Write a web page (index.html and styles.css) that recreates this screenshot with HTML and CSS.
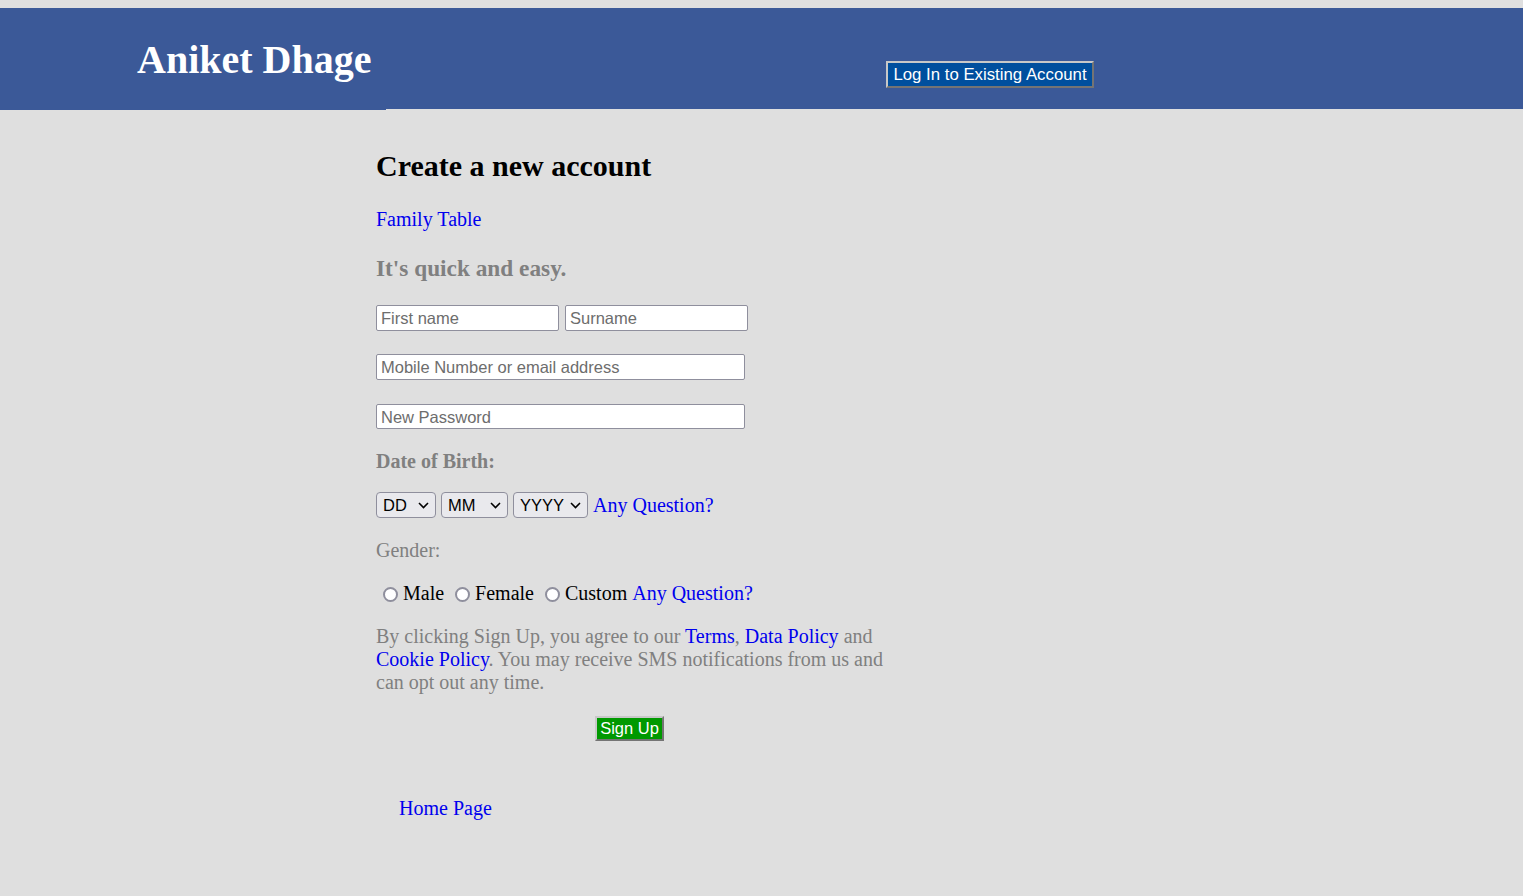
FILE: index.html
```html
<!DOCTYPE html>
<html>
<head>
<meta charset="utf-8">
<title>Sign Up</title>
<link rel="stylesheet" href="styles.css">
</head>
<body>
<header class="topbar">
  <div class="brand">Aniket Dhage</div>
  <div class="login-wrap"><button class="login-btn">Log In to Existing Account</button></div>
</header>
<main class="content">
  <h1 class="title">Create a new account</h1>
  <p class="line"><a href="#" class="link">Family Table</a></p>
  <h2 class="sub">It's quick and easy.</h2>
  <div class="row r1">
    <input class="field half" type="text" placeholder="First name">
    <input class="field half" type="text" placeholder="Surname">
  </div>
  <div class="row r2">
    <input class="field full" type="text" placeholder="Mobile Number or email address">
  </div>
  <div class="row r3">
    <input class="field full" type="password" placeholder="New Password">
  </div>
  <h3 class="label-bold">Date of Birth:</h3>
  <div class="row dob">
    <span class="sel-wrap"><select class="sel dd"><option>DD</option></select><svg class="chev" viewBox="0 0 11 7" width="11" height="7"><path d="M1 1l4.5 4.5L10 1" fill="none" stroke="#000" stroke-width="1.6"/></svg></span>
    <span class="sel-wrap"><select class="sel mm"><option>MM</option></select><svg class="chev" viewBox="0 0 11 7" width="11" height="7"><path d="M1 1l4.5 4.5L10 1" fill="none" stroke="#000" stroke-width="1.6"/></svg></span>
    <span class="sel-wrap"><select class="sel yy"><option>YYYY</option></select><svg class="chev" viewBox="0 0 11 7" width="11" height="7"><path d="M1 1l4.5 4.5L10 1" fill="none" stroke="#000" stroke-width="1.6"/></svg></span>
    <a href="#" class="link">Any Question?</a>
  </div>
  <p class="label">Gender:</p>
  <div class="row gender">
    <label class="radio"><input type="radio" name="g"><span>Male</span></label>
    <label class="radio"><input type="radio" name="g"><span>Female</span></label>
    <label class="radio"><input type="radio" name="g"><span>Custom</span></label>
    <a href="#" class="link">Any Question?</a>
  </div>
  <p class="terms">By clicking Sign Up, you agree to our <a href="#" class="link">Terms</a>, <a href="#" class="link">Data Policy</a> and <a href="#" class="link">Cookie Policy</a>. You may receive SMS notifications from us and can opt out any time.</p>
  <div class="submit-row"><button class="signup">Sign Up</button></div>
  <div class="home"><a href="#" class="link">Home Page</a></div>
</main>
</body>
</html>
```
FILE: styles.css
```css
html, body { margin: 0; padding: 0; }
body {
  background: #dfdfdf;
  padding-top: 8px;
  font-family: "Liberation Serif", "Times New Roman", serif;
  height: 888px;
}
.topbar {
  background: #3b5998;
  height: 101px;
  display: flex;
  align-items: flex-start;
}
.brand {
  height: 102px;
  width: 386px;
  box-sizing: border-box;
  padding-left: 137px;
  padding-top: 29px;
  background: #3b5998;
  color: #fff;
  font-weight: bold;
  font-size: 40px;
  line-height: 46px;
}
.login-wrap {
  padding-left: 500px;
  padding-top: 53px;
}
.login-btn {
  background: #004f9e;
  color: #fff;
  font-family: "Liberation Sans", Arial, sans-serif;
  font-size: 16.8px;
  border: 2px outset #c8c8c8;
  padding: 1px 4px 1px;
  height: 27px;
  width: 208px;
  margin: 0;
  white-space: nowrap;
}
.content {
  padding-left: 376px;
  padding-top: 1px;
  width: 515px;
}
.title {
  font-size: 30px;
  margin: 38px 0 0;
  line-height: 36px;
}
.line { margin: 24px 0 0; font-size: 20px; line-height: 23px; }
.link { color: #0000ee; text-decoration: none; }
.sub {
  color: #808080;
  font-size: 23.3px;
  margin: 24px 0 0;
  line-height: 27px;
}
.row { display: flex; align-items: center; gap: 6px; }
.r1 { margin-top: 23px; }
.r2 { margin-top: 23px; }
.r3 { margin-top: 24px; }
.field {
  font-family: "Liberation Sans", Arial, sans-serif;
  font-size: 16.5px;
  height: 26px;
  box-sizing: border-box;
  border: 1px solid #8f8f9d;
  border-radius: 2px;
  background: #fff;
  padding: 1px 4px 0;
  margin: 0;
}
.r3 .field { height: 25px; }
.field::placeholder { color: #6d6d6d; }
.half { width: 183px; }
.full { width: 369px; }
.label-bold {
  color: #808080;
  font-size: 20px;
  margin: 21px 0 0;
  line-height: 23px;
}
.dob { margin-top: 19px; gap: 0; }
.sel-wrap { position: relative; display: block; height: 26px; margin-right: 5px; }
.sel {
  appearance: none;
  -webkit-appearance: none;
  font-family: "Liberation Sans", Arial, sans-serif;
  font-size: 16.5px;
  height: 26px;
  box-sizing: border-box;
  border: 1px solid #8f8f9d;
  border-radius: 4px;
  background: #e9e9ed;
  color: #000;
  margin: 0;
  padding: 0 0 0 6px;
  display: block;
}
.chev { position: absolute; right: 7px; top: 10px; pointer-events: none; }
.dd { width: 60px; }
.mm { width: 67px; }
.yy { width: 75px; }
.dob .link { font-size: 20px; margin-left: 0; }
.label {
  color: #808080;
  font-size: 20px;
  margin: 21px 0 0;
  line-height: 23px;
}
.gender {
  margin-top: 20px;
  gap: 0;
  font-size: 20px;
  line-height: 23px;
}
.radio { display: inline-flex; align-items: center; }
.radio input {
  appearance: none;
  -webkit-appearance: none;
  margin: 1px 5px 0 7px;
  width: 15px;
  height: 15px;
  box-sizing: border-box;
  border: 2px solid #8f8f9d;
  border-radius: 50%;
  background: #fff;
}
.radio + .radio input { margin-left: 11px; }
.gender .link { margin-left: 5px; }
.terms {
  color: #808080;
  font-size: 20px;
  line-height: 23px;
  margin: 20px 0 0;
}
.submit-row { display: flex; padding-left: 219px; margin-top: 22px; }
.signup {
  background: #009900;
  color: #fff;
  font-family: "Liberation Sans", Arial, sans-serif;
  font-size: 16.5px;
  border: 2px outset #c8c8c8;
  padding: 0;
  height: 25px;
  width: 69px;
  margin: 0;
  white-space: nowrap;
}
.home { padding-left: 23px; margin-top: 56px; font-size: 20px; line-height: 23px; }
```
